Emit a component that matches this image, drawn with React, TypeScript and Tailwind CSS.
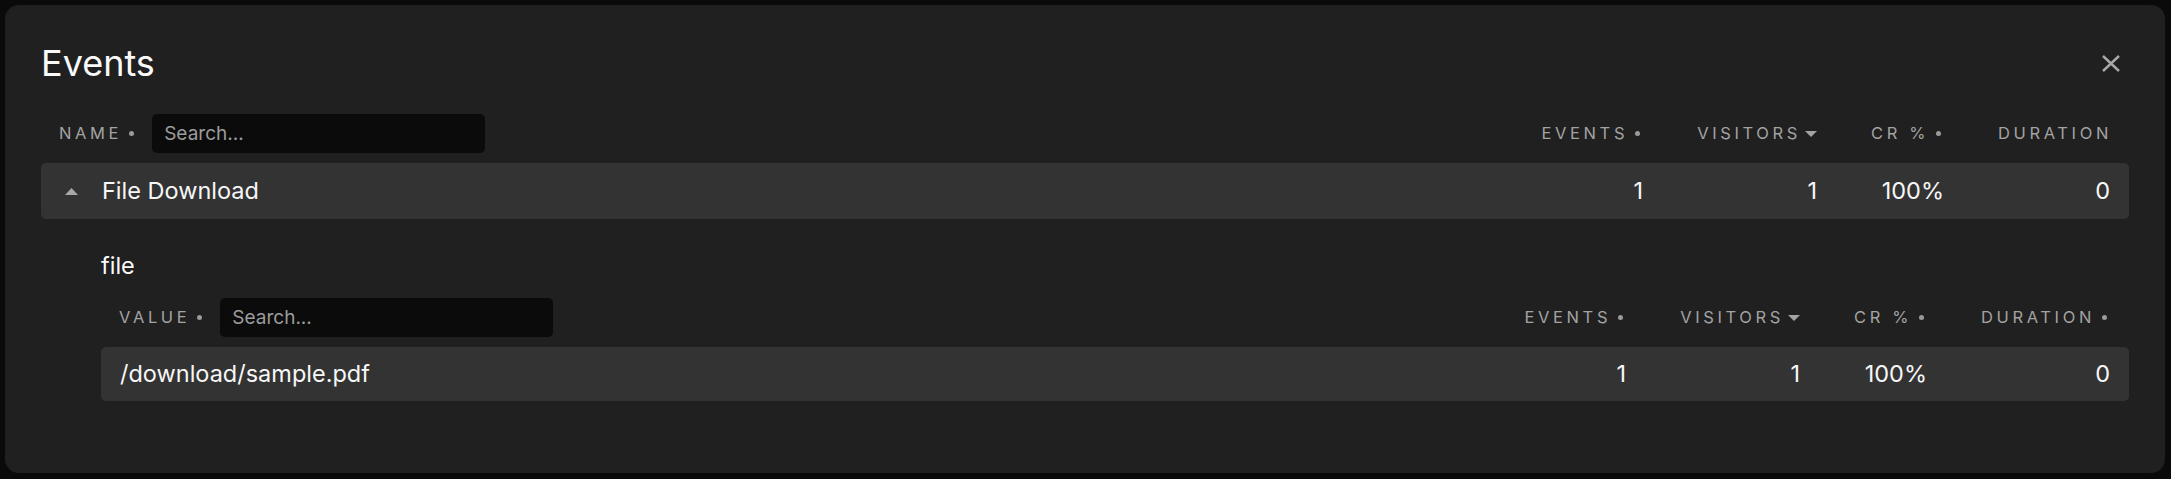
// Events modal: breakdown table with an expanded property row.
const COLS = ["EVENTS", "VISITORS", "CR %", "DURATION"];

function Dot() {
  return <span className="block h-[5px] w-[5px] shrink-0 rounded-full bg-[#9a9a9a]" />;
}

function SortDown() {
  return (
    <svg width="12" height="6" viewBox="0 0 12 6" className="shrink-0">
      <path d="M0 0h12L6 6z" fill="#a3a3a3" />
    </svg>
  );
}

function SortUp() {
  return (
    <svg width="13" height="7" viewBox="0 0 13 7" className="shrink-0">
      <path d="M0 7h13L6.5 0z" fill="#a8a8a8" />
    </svg>
  );
}

function Search() {
  return (
    <input
      placeholder="Search..."
      className="h-[39px] w-[333px] rounded-[5px] bg-[#0b0b0b] px-3 text-[19px] tracking-normal text-white normal-case outline-none placeholder:text-[#9c9c9c]"
    />
  );
}

type Row = { label: string; values: string[] };

function Table({
  label,
  row,
  durationDot,
  expand,
  rowH,
}: {
  label: string;
  row: Row;
  durationDot: boolean;
  expand: boolean;
  rowH: string;
}) {
  return (
    <div className="grid grid-cols-[1fr_auto_auto_auto_auto]">
      {/* header */}
      <div className="col-span-5 grid grid-cols-subgrid items-center text-[16.5px] uppercase tracking-[0.22em] text-[#a3a3a3]">
        <div className="flex items-center pl-[18px]">
          <span>{label}</span>
          <span className="ml-[7px]">
            <Dot />
          </span>
          <span className="ml-[18px]">
            <Search />
          </span>
        </div>
        {COLS.map((c, i) => {
          const dot = !(c === "DURATION" && !durationDot);
          const pr = i === 3 ? (dot ? "pr-[22px]" : "pr-[17px]") : c === "VISITORS" ? "pr-0" : "pr-[3px]";
          return (
            <div key={c} className={"flex items-center justify-end pl-[54px] " + pr}>
              <span>{c}</span>
              {c === "VISITORS" ? (
                <span className="ml-[4px]">
                  <SortDown />
                </span>
              ) : dot ? (
                <span className="ml-[7px]">
                  <Dot />
                </span>
              ) : null}
            </div>
          );
        })}
      </div>

      {/* data row */}
      <div
        className={
          "col-span-5 mt-[10px] grid grid-cols-subgrid items-center rounded-[5px] bg-[#333333] text-[23.5px] text-[#f7f7f7] " +
          rowH
        }
      >
        {expand ? (
          <div className="flex items-center gap-[24px] pl-[24px]">
            <SortUp />
            <span>{row.label}</span>
          </div>
        ) : (
          <div className="pl-[19px]">{row.label}</div>
        )}
        {row.values.map((v, i) => (
          <div key={i} className={"pl-[54px] text-right " + (i === 3 ? "pr-[19px]" : "")}>
            {v}
          </div>
        ))}
      </div>
    </div>
  );
}

export default function App() {
  return (
    <div className="h-[479px] w-[2171px] bg-[#0a0a0a] p-[5px] font-['Inter',sans-serif]">
      <div className="h-[468px] w-[2160px] rounded-[14px] bg-[#202020] px-9 pt-[38px]">
        <div className="flex h-[40px] items-center justify-between">
          <h1 className="text-[36px] leading-[40px] text-[#fafafa]">Events</h1>
          <svg width="18" height="17" viewBox="0 0 18 17" className="mr-[9px]">
            <path d="M1 1l16 15M17 1L1 16" stroke="#a8a8a8" strokeWidth="2.4" />
          </svg>
        </div>

        <div className="mt-[31px]">
          <Table
            label="Name"
            row={{ label: "File Download", values: ["1", "1", "100%", "0"] }}
            durationDot={false}
            expand
            rowH="h-[56px]"
          />
        </div>

        <div className="pl-[60px]">
          <div className="mt-[31px] text-[23.5px] leading-[32px] text-[#fafafa]">file</div>
          <div className="mt-[16px]">
            <Table
              label="Value"
              row={{ label: "/download/sample.pdf", values: ["1", "1", "100%", "0"] }}
              durationDot
              expand={false}
              rowH="h-[54px]"
            />
          </div>
        </div>
      </div>
    </div>
  );
}
